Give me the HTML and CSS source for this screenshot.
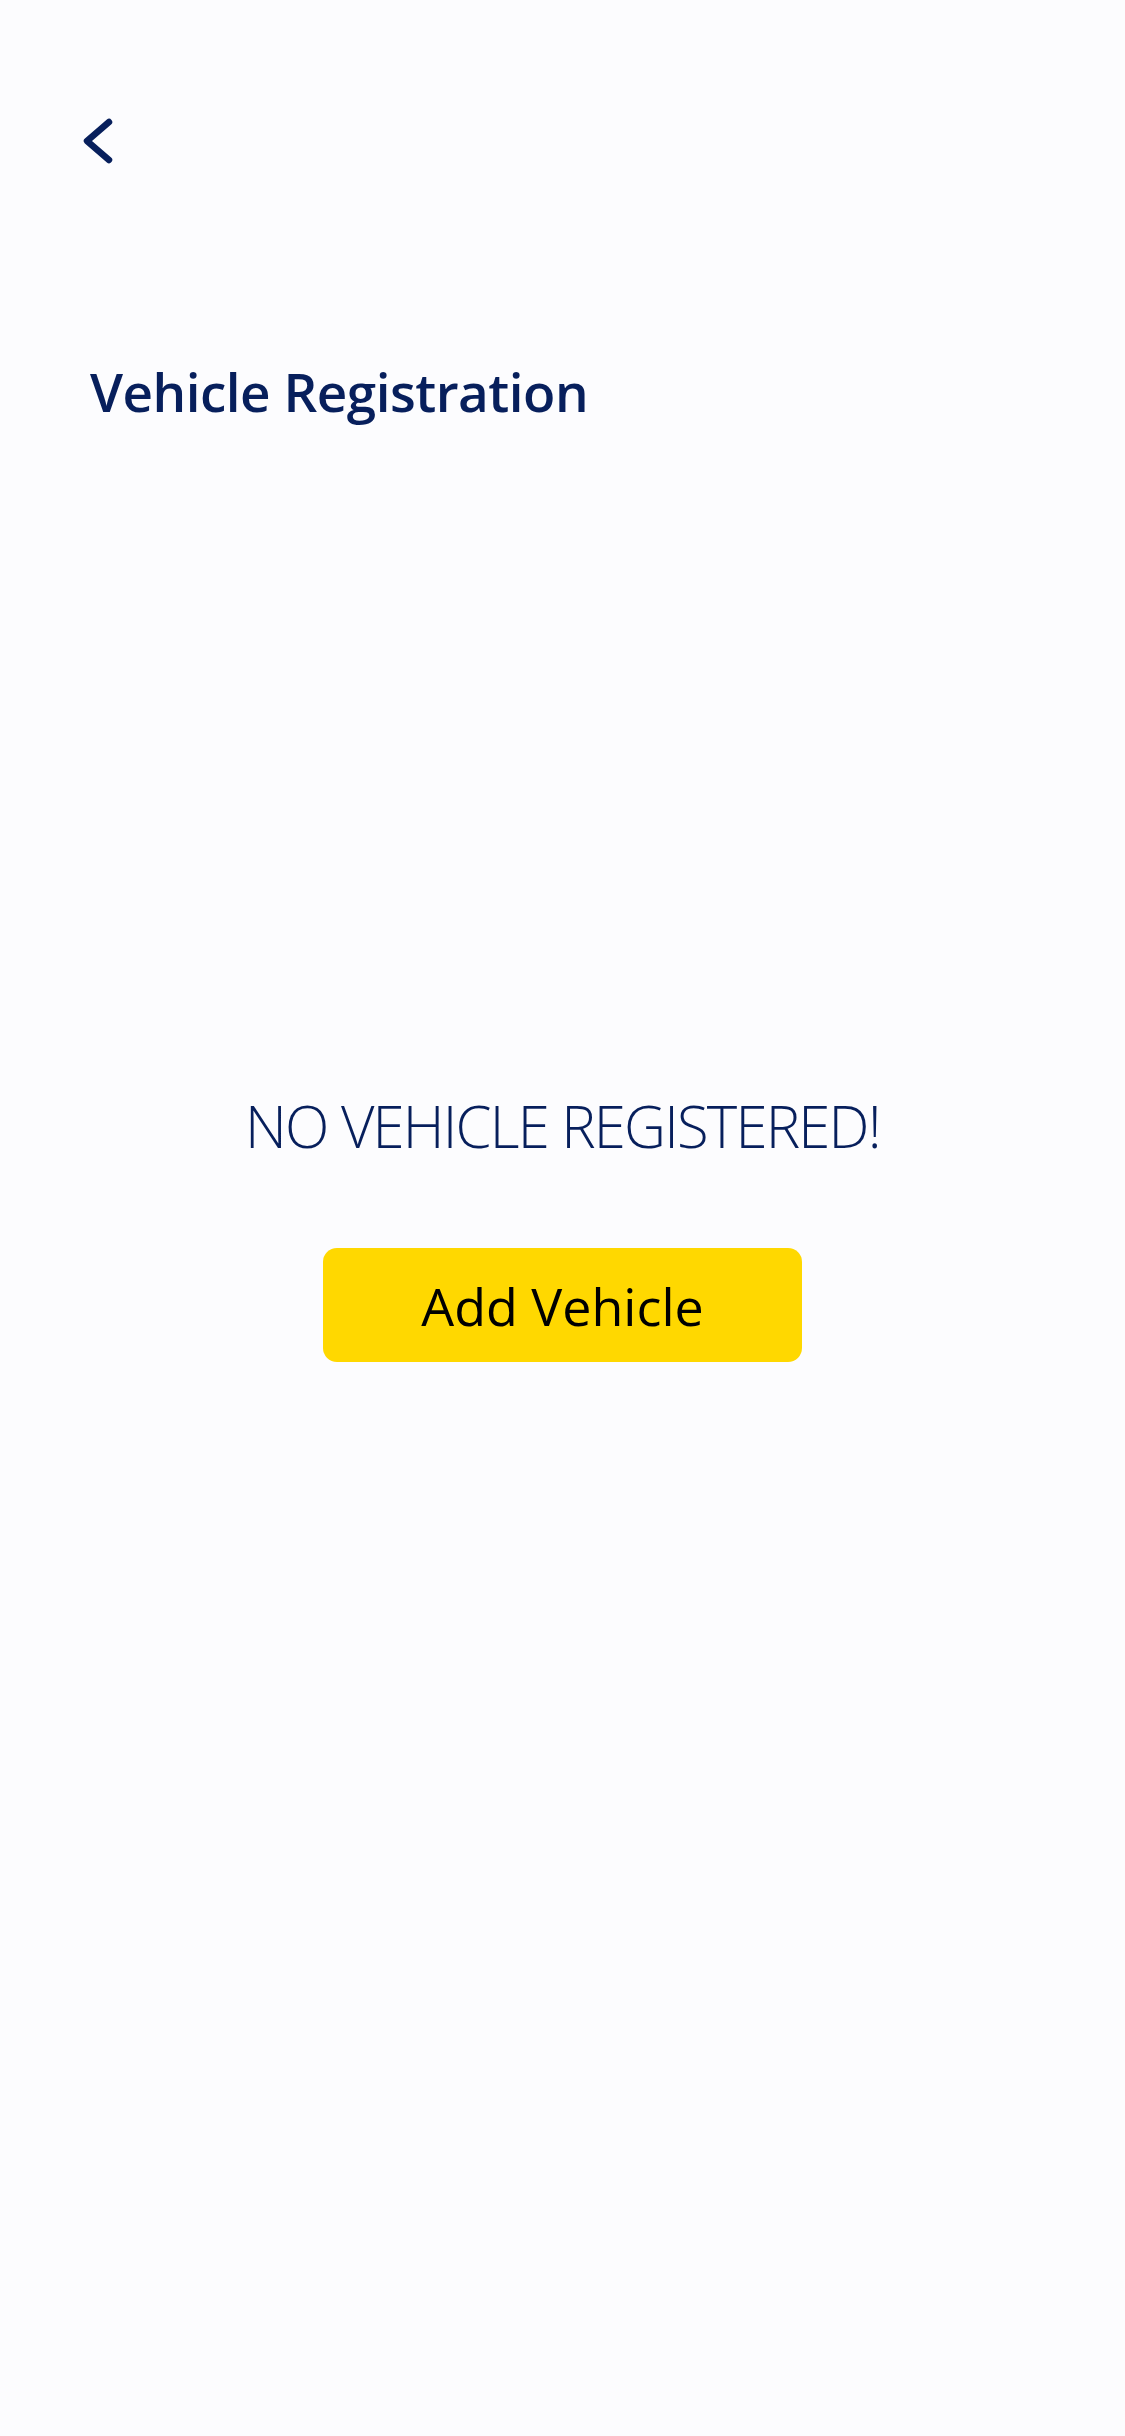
FILE: index.html
```html
<!DOCTYPE html>
<html>
<head>
<meta charset="utf-8">
<link rel="stylesheet" href="styles.css">
</head>
<body>
<div class="page">
  <header class="topbar">
    <button class="back" aria-label="Back">
      <svg width="40" height="52" viewBox="0 0 40 52"><polyline points="29,7 7,26 29,45" fill="none" stroke="#071f5c" stroke-width="6.5" stroke-linecap="round" stroke-linejoin="round"/></svg>
    </button>
  </header>
  <h1 class="title">Vehicle Registration</h1>
  <main class="empty">
    <p class="empty-text">NO VEHICLE REGISTERED!</p>
    <button class="add-btn">Add Vehicle</button>
  </main>
</div>
</body>
</html>
```
FILE: styles.css
```css
html, body {
  margin: 0;
  padding: 0;
  background: #fcfcfe;
}
body {
  font-family: "Open Sans", "Noto Sans", sans-serif;
  color: #071f5c;
}
.page {
  width: 1125px;
  min-height: 2436px;
  display: flex;
  flex-direction: column;
}
.topbar {
  padding: 115px 0 0 80px;
  height: 52px;
}
.back {
  background: none;
  border: 0;
  padding: 0;
  margin: 0;
  display: block;
}
.back svg { display: block; }
.title {
  margin: 190px 0 0 90px;
  font-size: 53px;
  font-weight: 600;
  line-height: 70px;
  letter-spacing: -0.5px;
  color: #071f5c;
}
.empty {
  display: flex;
  flex-direction: column;
  align-items: center;
  margin-top: 659px;
}
.empty-text {
  margin: 0;
  font-size: 58px;
  font-weight: 300;
  line-height: 80px;
  letter-spacing: -1.8px;
  color: #071f5c;
}
.add-btn {
  margin-top: 82px;
  width: 479px;
  height: 114px;
  border: 0;
  border-radius: 14px;
  background: #ffd800;
  color: #000;
  font-family: "Open Sans", "Noto Sans", sans-serif;
  font-size: 52px;
  font-weight: 400;
  padding: 0;
}
```
